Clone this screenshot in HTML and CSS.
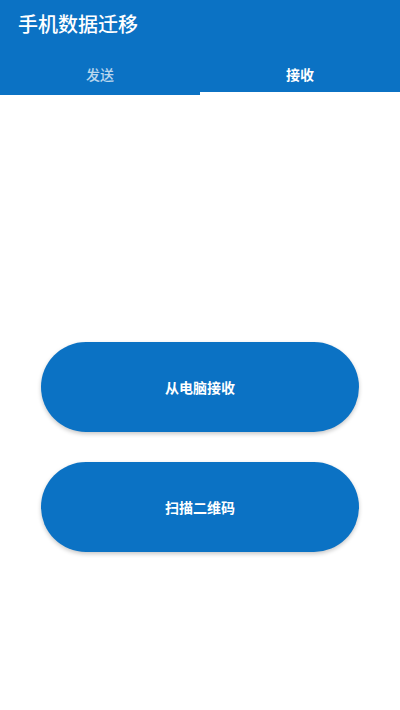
FILE: index.html
```html
<!DOCTYPE html>
<html lang="zh-CN">
<head>
  <meta charset="UTF-8" />
  <meta name="viewport" content="width=device-width, initial-scale=1.0"/>
  <title>手机数据迁移</title>
  <link rel="stylesheet" href="styles.css">
</head>
<body>

  <div class="appbar">
    <h1 class="title">手机数据迁移</h1>
    <div class="tabs">
      <div class="tab">发送</div>
      <div class="tab active">接收</div>
    </div>
  </div>

  <div class="content">
    <button class="pill">从电脑接收</button>
    <button class="pill">扫描二维码</button>
  </div>

</body>
</html>
```

FILE: styles.css
```css
body {
  margin: 0;
  font-family: "Noto Sans CJK SC", "Noto Sans", sans-serif;
  background: #ffffff;
  width: 400px;
  height: 710px;
  overflow: hidden;
}

.appbar {
  background-color: #0b72c4;
  color: white;
}

.title {
  margin: 0;
  padding: 10px 18px 0;
  height: 38px;
  font-size: 20px;
  font-weight: 500;
  line-height: 28px;
}

.tabs {
  display: flex;
}

.tab {
  flex: 1;
  text-align: center;
  font-size: 14px;
  font-weight: 500;
  padding-top: 8px;
  line-height: 36px;
  color: rgba(255, 255, 255, 0.72);
  border-bottom: 3px solid transparent;
}

.tab.active {
  color: white;
  font-weight: 700;
  border-bottom-color: #ffffff;
}

.content {
  display: flex;
  flex-direction: column;
  align-items: center;
  gap: 30px;
  padding-top: 247px;
}

.pill {
  width: 318px;
  height: 90px;
  border: none;
  border-radius: 45px;
  background-color: #0b72c4;
  color: white;
  font-family: inherit;
  font-size: 14px;
  font-weight: 700;
  box-shadow: 0 2px 4px rgba(0, 0, 0, 0.22);
  cursor: pointer;
}
```
